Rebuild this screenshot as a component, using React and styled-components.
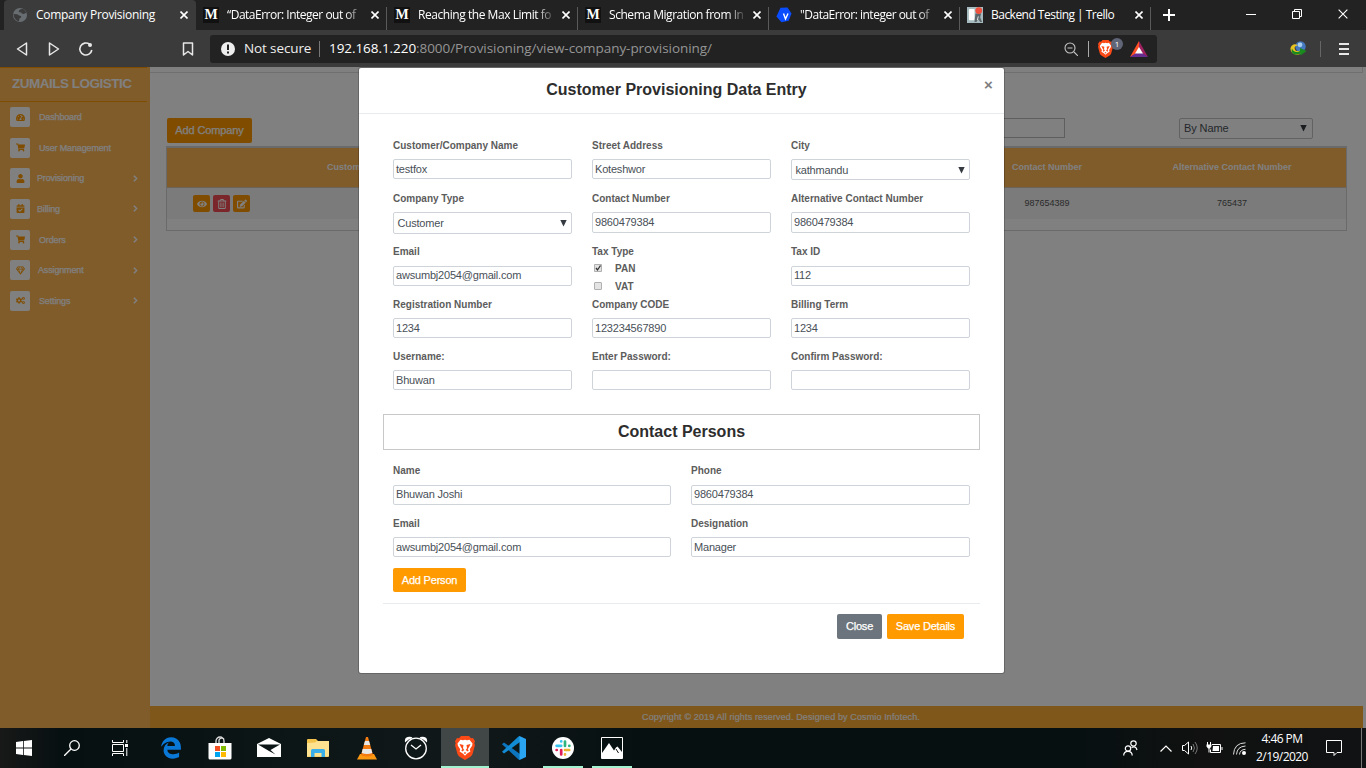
import React from "react";
import styled, { createGlobalStyle } from "styled-components";
import {
  FaTachometerAlt, FaShoppingCart, FaUser, FaCalendarCheck, FaRegGem, FaCogs,
  FaChevronRight, FaEye, FaRegTrashAlt, FaEdit, FaEdgeLegacy,
} from "react-icons/fa";

const sans = '"Liberation Sans", Arial, sans-serif';
const system = '"Open Sans", "Noto Sans", sans-serif';

const GlobalStyle = createGlobalStyle`
  * { box-sizing: border-box; }
  body { margin: 0; background: #222; font-family: ${sans}; overflow: hidden; }
  svg { display: block; flex: none; }
`;

const Screen = styled.div`
  width: 1366px;
  height: 768px;
  display: flex;
  flex-direction: column;
  overflow: hidden;
`;

/* ---------- browser ---------- */
const TabStrip = styled.header`
  height: 30px;
  flex: none;
  display: flex;
  padding-left: 4px;
  background: #222;
  color: #fff;
  font: 12px/30px ${system};
`;
const Tab = styled.div`
  width: ${(p) => (p.$active ? 192 : 191)}px;
  display: flex;
  align-items: center;
  padding: 0 3px 0 ${(p) => (p.$active ? 8 : 7)}px;
  background: ${(p) => (p.$active ? "#3b3b3b" : "transparent")};
  border-radius: 4px 4px 0 0;
`;
const Divider = styled.i`
  width: 1px;
  height: ${(p) => p.$h || 23}px;
  background: ${(p) => p.$color || "#5a5a5a"};
  align-self: ${(p) => (p.$h ? "center" : "flex-end")};
  margin-left: -1px;
  flex: none;
`;
const Favicon = styled.span`
  width: 16px;
  height: 16px;
  margin-right: 8px;
  flex: none;
`;
const MediumMark = styled(Favicon)`
  background: #111;
  color: #fff;
  font: bold 14px/16px "Liberation Serif", serif;
  text-align: center;
`;
const TabTitle = styled.span`
  width: 138px;
  white-space: nowrap;
  letter-spacing: ${(p) => p.$spacing || 0}px;
  ${(p) => p.$fade && "mask-image: linear-gradient(90deg, #000 118px, transparent 138px);"}
`;
const TabClose = styled.span`
  margin-left: auto;
  width: 18px;
  display: grid;
  place-items: center;
`;
const NewTab = styled.span`
  width: 36px;
  display: grid;
  place-items: center;
`;
const WindowButtons = styled.div`
  margin-left: auto;
  display: flex;
  height: 28px;
`;
const WindowButton = styled.span`
  width: 46px;
  display: grid;
  place-items: center;
`;
const Toolbar = styled.nav`
  height: 37px;
  flex: none;
  display: flex;
  align-items: center;
  padding: 0 17px 0 14px;
  background: #3b3b3b;
`;
const NavButtons = styled.div`
  width: 196px;
  display: flex;
  align-items: center;
  gap: 16px;
  padding-right: 14px;
  & > :last-child { margin-left: auto; }
`;
const AddressBar = styled.div`
  width: 947px;
  height: 28px;
  display: flex;
  align-items: center;
  padding: 0 9px 0 11px;
  border-radius: 3px;
  background: #222;
  color: #fff;
  font: 13.5px/26px ${system};
`;
const SecurityLabel = styled.span`
  width: 67px;
  height: 28px;
  margin: 0 9px 0 9px;
  letter-spacing: -0.12px;
  white-space: nowrap;
  color: #eee;
`;
const Url = styled.span`
  height: 28px;
  margin-left: 9px;
  letter-spacing: -0.06px;
  white-space: nowrap;
  color: #959595;
  b { font-weight: 400; color: #fff; }
`;
const AddressTools = styled.div`
  margin-left: auto;
  display: flex;
  align-items: center;
`;
const Shield = styled.span`
  position: relative;
  margin: 0 17px 0 9px;
`;
const ShieldCount = styled.span`
  position: absolute;
  left: 13px;
  top: -2px;
  width: 12px;
  height: 12px;
  border-radius: 6px;
  background: #606577;
  color: #fff;
  font: 8px/12px ${system};
  text-align: center;
`;
const ToolbarEnd = styled.div`
  margin-left: auto;
  display: flex;
  align-items: center;
`;

/* ---------- application page ---------- */
const Page = styled.main`
  position: relative;
  height: 661px;
  flex: none;
  display: flex;
  background: #fff;
`;
const Sidebar = styled.aside`
  width: 150px;
  padding-right: 3px;
  background: #ffb856;
`;
const Brand = styled.div`
  height: 35px;
  border-top: 1px solid #ff9a00;
  border-bottom: 1px solid #ff9a00;
  color: #fff;
  font: bold 13.5px/32px ${sans};
  letter-spacing: -0.5px;
  white-space: nowrap;
  padding-left: 12px;
`;
const Menu = styled.div`
  display: flex;
  flex-direction: column;
  gap: 10.67px;
  padding: 5px 10px 0;
`;
const MenuItem = styled.div`
  height: 20px;
  display: flex;
  align-items: center;
  color: #fff;
  font-size: 9px;
  letter-spacing: -0.15px;
  -webkit-text-stroke: 0.25px #fff;
`;
const MenuIcon = styled.span`
  width: 20px;
  height: 20px;
  margin-right: ${(p) => p.$gap}px;
  border-radius: 2px;
  display: grid;
  place-items: center;
  background: #fff;
  color: #ff9a00;
`;
const Chevron = styled(FaChevronRight)`
  margin-left: auto;
  margin-right: -2px;
  stroke: #fff;
  stroke-width: 30px;
`;
const Content = styled.section`
  width: 1213px;
  display: flex;
  flex-direction: column;
`;
const TopStrip = styled.div`
  height: 6px;
  border: solid #ddd;
  border-width: 0 1px 1px 0;
`;
const Filters = styled.div`
  display: flex;
  align-items: flex-start;
  justify-content: space-between;
  height: 73px;
  padding: 45px 50px 0 17px;
`;
const Button = styled.button`
  height: ${(p) => p.$h || 25}px;
  width: ${(p) => p.$w}px;
  padding: 0;
  border: 0;
  border-radius: 2px;
  background: ${(p) => (p.$grey ? "#6c757d" : "#ff9a00")};
  color: #fff;
  font: 11px/1 ${sans};
  letter-spacing: ${(p) => p.$spacing ?? -0.2}px;
  -webkit-text-stroke: 0.25px #fff;
  white-space: nowrap;
`;
const SearchBox = styled.div`
  width: 280px;
  height: 20px;
  margin-left: 533px;
  border: 1px solid #bbb;
`;
const FilterSelect = styled.div`
  width: 134px;
  height: 21px;
  margin-left: auto;
  display: flex;
  align-items: center;
  justify-content: space-between;
  padding: 0 5px 1px 4px;
  border: 1px solid #c4c4c4;
  border-radius: 2px;
  font-size: 11px;
  letter-spacing: -0.1px;
  color: #495057;
`;
const Table = styled.div`
  width: 1181px;
  margin-left: 16px;
  height: 85px;
  border: 1px solid #d4d4d4;
  border-top: 2px solid #d4d4d4;
`;
const TableRow = styled.div`
  display: grid;
  grid-template-columns: 139px 111px 300px 260px 140px 230px;
  align-items: center;
  text-align: center;
  height: ${(p) => (p.$head ? 40 : 31)}px;
  background: ${(p) => (p.$head ? "#ffb856" : "#f5f5f5")};
  border-bottom: ${(p) => (p.$head ? "1px solid #d8c8b0" : "0")};
  color: ${(p) => (p.$head ? "#fff" : "#555")};
  font: ${(p) => (p.$head ? "bold" : "normal")} 9px/1 ${sans};
  white-space: nowrap;
`;
const RowActions = styled.div`
  display: flex;
  gap: 3px;
  padding-left: 26px;
`;
const RowButton = styled.span`
  width: 17px;
  height: 17px;
  border-radius: 2px;
  display: grid;
  place-items: center;
  color: #fff;
  background: ${(p) => (p.$danger ? "#f44d54" : "#ff9a00")};
`;
const Footer = styled.footer`
  height: 22px;
  margin-top: auto;
  background: #ffae36;
  color: #fff;
  text-align: center;
  font: 9px/22px ${sans};
  letter-spacing: 0.13px;
  -webkit-text-stroke: 0.15px #fff;
  padding-left: 49px;
`;

/* ---------- dialog ---------- */
const Backdrop = styled.div`
  position: absolute;
  inset: 0;
  padding: 1px 0 0 359px;
  background: rgba(0, 0, 0, 0.498);
`;
const Dialog = styled.div`
  width: 645px;
  height: 605px;
  border-radius: 2px;
  background: #fff;
  box-shadow: 0 0 0 1px rgba(0, 0, 0, 0.2);
`;
const DialogHeader = styled.div`
  height: 46px;
  display: flex;
  align-items: center;
  padding: 0 11px 2px 0;
  border-bottom: 1px solid #e9ecef;
`;
const Title = styled.h5`
  flex: 1;
  margin: 0 0 0 10px;
  text-align: center;
  color: #2d2d2d;
  font: bold 16px/20px ${sans};
  padding-top: 1px;
`;
const DismissButton = styled.span`
  width: 9px;
  color: #7f7f7f;
  font: bold 15px/1 ${sans};
  margin-top: -11px;
`;
const DialogBody = styled.div`
  padding: 25px 24px 0;
`;
const FieldGrid = styled.div`
  display: grid;
  grid-template-columns: repeat(3, 179px);
  grid-template-rows: 53px 53px 53px 52px 64px;
  column-gap: 20px;
  padding: 0 10px;
`;
const PersonGrid = styled.div`
  display: grid;
  grid-template-columns: 278px 279px;
  grid-template-rows: 53px 51px;
  column-gap: 20px;
  padding: 14px 10px 0;
`;
const Label = styled.label`
  display: block;
  height: ${(p) => p.$h || 20}px;
  color: #5c5c5c;
  font: bold 10px/14px ${sans};
  white-space: nowrap;
`;
const Control = styled.div`
  height: ${(p) => p.$h || 20}px;
  display: flex;
  align-items: center;
  justify-content: space-between;
  padding: ${(p) => (p.$select ? "1px 4px 0 3.5px" : p.$raised ? "0 2px 2px" : "0 2px")};
  border: 1px solid #ced4da;
  border-radius: 2px;
  color: #495057;
  font: 11px/1 ${sans};
  letter-spacing: -0.19px;
`;
const CheckRow = styled.div`
  display: flex;
  align-items: center;
  gap: 13px;
  height: 18px;
  padding-left: 2px;
  color: #5c5c5c;
  font: bold 10px/12px ${sans};
`;
const CheckLabel = styled.span`
  padding-top: 1px;
`;
const CheckBox = styled.span`
  width: 8px;
  height: 8px;
  border: 1px solid #b0b0b0;
  border-radius: 1px;
  background: #e4e4e4;
`;
const SectionTitle = styled.h5`
  height: 36px;
  margin: 0;
  border: 1px solid #c8c8c8;
  text-align: center;
  color: #2d2d2d;
  font: bold 16px/33px ${sans};
`;
const AddRow = styled.div`
  height: 36px;
  padding-left: 10px;
  border-bottom: 1px solid #e9ecef;
`;
const DialogFooter = styled.div`
  display: flex;
  justify-content: flex-end;
  gap: 5px;
  padding: 10px 16px 0 0;
`;

/* ---------- desktop taskbar ---------- */
const Taskbar = styled.div`
  height: 40px;
  flex: none;
  display: flex;
  color: #fff;
  background: linear-gradient(90deg, #181818 0, #071011 60px, #0d1617 300px, #101819 480px, #071011 640px, #071011 1080px, #101110 1200px, #101214 100%);
`;
const SystemButtons = styled.div`
  display: flex;
  width: 147px;
`;
const AppButtons = styled.div`
  display: flex;
  gap: 1px;
`;
const TaskButton = styled.span`
  width: 48px;
  height: 40px;
  display: grid;
  place-items: center;
  background: ${(p) => (p.$active ? "#414746" : "transparent")};
  ${(p) => p.$line && `
    background-image: linear-gradient(#a3f3d0, #a3f3d0);
    background-size: ${p.$line}px 2px;
    background-position: center bottom;
    background-repeat: no-repeat;
  `}
`;
const Tray = styled.div`
  margin-left: auto;
  display: flex;
  align-items: center;
`;
const TrayItem = styled.span`
  width: ${(p) => p.$w}px;
  display: grid;
  place-items: center;
`;
const Clock = styled.span`
  width: 60px;
  text-align: center;
  font: 12px/18px ${system};
  letter-spacing: -0.55px;
  white-space: nowrap;
`;

/* ---------- drawings ---------- */
const Cross = ({ size = 8, width = 1.6 }) => (
  <svg width={size} height={size} viewBox="0 0 8 8" stroke="#fff" strokeWidth={width}><path d="M.5.5l7 7M7.5.5l-7 7" /></svg>
);
const Caret = () => (
  <svg width="7" height="7" viewBox="0 0 7 7"><path d="M.3 0h6.400L3.500 6.500z" fill="#343a40" /></svg>
);
const Globe = () => (
  <svg width="16" height="16" viewBox="0 0 16 16"><circle cx="8" cy="8" r="7" fill="#686d72" /><path d="M1.500 7l3.500.2c1.500 0 1.300 1.600 3 1.600s1.600 1.800.2 2.300-.4 2.400-1.700 3.300Q2 12.500 1.500 7zM8 2.500l3-.8q2.500 1.300 3.300 4l-2.500 1.200-2-.3q-.3-1.300-2-1.300t-.9-1.500z" fill="#3b3b3b" /></svg>
);
const Vuf = () => (
  <svg width="16" height="16" viewBox="0 0 16 16"><path d="M4.500.8l7-.3 4 6.100-2.800 7.200-7.200 1.500L.4 9.500z" fill="#0a4dff" /><path d="M7.500 6.500l2 5.500L12 6.500" fill="none" stroke="#fff" strokeWidth="1.400" /></svg>
);
const Board = () => (
  <svg width="16" height="16" viewBox="0 0 17 17"><path d="M0 0h17v17H0z" fill="#a5bbc0" /><rect x="2" y="2" width="6" height="12" rx="1" fill="#fff" /><path d="M9 7h6l-1 4 2 5h-2l-2-3-2 3H8z" fill="#5d666a" /><path d="M12 10l-1 4" stroke="#eee" /><circle cx="12.500" cy="3.800" r="3.600" fill="#f0503e" /></svg>
);
const BraveLogo = ({ width, height }) => (
  <svg width={width} height={height} viewBox="0 0 20 24">
    <path d="M6 0h8l2 2.200 2-.2 2 3.200-.7 2L20 9l-2.300 8.600q-.5 2-2.200 3.200L10 24l-5.500-3.200q-1.700-1.200-2.200-3.200L0 9l.7-1.800-.7-2L2 2l2 .2z" fill="#fb4a16" />
    <path d="M5.500 3.700l2.500.5 2-.5 2 .5 2.500-.5 3 3.800-.4 2.300-2.300 3.500.6 2.300-3.200 1.900L10 19.800l-2.200-2.300-3.200-1.900.6-2.300-2.300-3.500-.4-2.300z" fill="#fff" />
    <path d="M4.500 8l4 1-.5 3.300 1.300 1.700-2 1.500-1-1.200 1-1-1.800-3zM15.500 8l-4 1 .5 3.300-1.300 1.700 2 1.500 1-1.200-1-1 1.800-3zM8.700 17l1.300-.9 1.300.9-1.300 1z" fill="#fb4a16" />
  </svg>
);
const Bat = () => (
  <svg width="18" height="16" viewBox="0 0 18 16"><path d="M9 0L0 16l9-5z" fill="#ff5026" /><path d="M9 0l9 16-9-5z" fill="#9e2160" /><path d="M0 16h18l-9-6z" fill="#662d91" /><path d="M9 6l4 6.500H5z" fill="#fff" /></svg>
);
const Idm = () => (
  <svg width="17" height="15" viewBox="0 0 17 15"><circle cx="10.500" cy="5.500" r="5.200" fill="#4579bf" /><circle cx="10" cy="3.800" r="2.400" fill="#a9cdec" /><path d="M.5 7C2 3 5 2.500 8 4.500 5 4.500 4 6.500 5 8.500s4 2 7 0l-1 4C6 16 0 12 .5 7z" fill="#e9c320" /><path d="M2 7.500c1 3.500 5 4.500 8 2.500V7l6.500 3-6 4.500v-2C6 15 0 13 2 7.500z" fill="#188a1e" /></svg>
);
const StoreIcon = () => (
  <svg width="24" height="24" viewBox="0 0 24 24"><path d="M8 7V5a4 4 0 0 1 8 0v2M11 7V4a3 3 0 0 1 5-1" fill="none" stroke="#ddd" strokeWidth="1.300" /><path d="M.5 7h23v15a1.500 1.500 0 0 1-1.500 1.500H2A1.500 1.500 0 0 1 .5 22z" fill="#fff" /><path d="M7 10h5v5H7z" fill="#f25022" /><path d="M13 10h5v5h-5z" fill="#7fba00" /><path d="M7 16h5v5H7z" fill="#00a4ef" /><path d="M13 16h5v5h-5z" fill="#ffb900" /></svg>
);
const MailIcon = () => (
  <svg width="24" height="20" viewBox="0 0 24 20"><path d="M0 6L12 0l12 6v13H0z" fill="#fff" /><path d="M1 6.500h22L13.500 12l5 4.500L12 13z" fill="#0d1617" /></svg>
);
const FolderIcon = () => (
  <svg width="22" height="19" viewBox="0 0 22 19"><path d="M0 1a1 1 0 0 1 1-1h8l2 2h10.500v16H0z" fill="#f2c24b" /><path d="M0 4l8-.5L10 2h12v15.500H0z" fill="#ffe28f" /><path d="M4 18v-6.500A1.500 1.500 0 0 1 5.500 10h11a1.500 1.500 0 0 1 1.500 1.500V18h-3.500v-4h-7v4z" fill="#3aaee8" /></svg>
);
const ConeIcon = () => (
  <svg width="20" height="23" viewBox="0 0 20 23"><path d="M3 17h14l3 5.500H0z" fill="#fb9a12" /><path d="M9 0h2l5 18q-6 3-12 0z" fill="#f47a12" /><path d="M8 4h4l1.200 4H6.800zM5.700 12h8.600l1 4q-5.300 2-10.600 0z" fill="#e8e8e8" /></svg>
);
const AlarmIcon = () => (
  <svg width="24" height="24" viewBox="0 0 24 24" fill="none" stroke="#fff"><circle cx="12" cy="12.500" r="10.300" strokeWidth="1.300" /><path d="M7 9l5 4 5-4" strokeWidth="1.300" /><path d="M1 6.500Q0 1 5 .7q3-.2 3.500 1.300Q4 3 1 6.500zM23 6.500Q24 1 19 .7q-3-.2-3.500 1.300Q20 3 23 6.500z" fill="#fff" stroke="none" /></svg>
);
const CodeIcon = () => (
  <svg width="24" height="24" viewBox="0 0 24 24"><path d="M0 8.200l2-1.800L18 18v6l-1.500-.5z" fill="#0d75bd" /><path d="M0 15.700l2 1.800L18 6V0l-1.500.5z" fill="#128bd5" /><path d="M17.500 0L24 3v18l-6.500 3z" fill="#2aa5f2" /></svg>
);
const SlackIcon = () => (
  <svg width="22" height="22" viewBox="0 0 22 22" strokeLinecap="round"><circle cx="11" cy="11" r="11" fill="#fff" /><path d="M9.200 4.300v.2M4.600 8.800h4.600" stroke="#36c5f0" strokeWidth="2.700" /><path d="M13 4.600v4.300M17.400 8.800h-.2" stroke="#2eb67d" strokeWidth="2.700" /><path d="M17.200 13h-4.200M13 17.600v-.2" stroke="#ecb22e" strokeWidth="2.700" /><path d="M9.200 17.400v-4.400M4.600 13h.2" stroke="#e01e5a" strokeWidth="2.700" /></svg>
);
const PhotoIcon = () => (
  <svg width="22" height="22" viewBox="0 0 22 22"><path d="M.5.5h21v21H.5z" fill="none" stroke="#fff" /><path d="M1 16l7-10 5 7.500 2-3 1.500-1L21 15v6H1z" fill="#fff" /><path d="M15 12l2.500 4" stroke="#111" /></svg>
);

const tabs = [
  { title: "Company Provisioning", icon: <Favicon><Globe /></Favicon>, active: true, spacing: -0.3 },
  { title: "“DataError: Integer out of", icon: <MediumMark>M</MediumMark>, fade: true, spacing: -0.5 },
  { title: "Reaching the Max Limit fo", icon: <MediumMark>M</MediumMark>, fade: true, spacing: -0.45 },
  { title: "Schema Migration from In", icon: <MediumMark>M</MediumMark>, fade: true, spacing: -0.45 },
  { title: "\"DataError: integer out of", icon: <Favicon><Vuf /></Favicon>, fade: true, spacing: -0.5 },
  { title: "Backend Testing | Trello", icon: <Favicon><Board /></Favicon>, spacing: -0.52 },
];

const menu = [
  ["Dashboard", FaTachometerAlt, 9, false],
  ["User Management", FaShoppingCart, 9, false],
  ["Provisioning", FaUser, 7, true],
  ["Billing", FaCalendarCheck, 7, true],
  ["Orders", FaShoppingCart, 9, true],
  ["Assignment", FaRegGem, 8, true],
  ["Settings", FaCogs, 9, true],
];

const Field = ({ label, value, h, labelHeight, select }) => (
  <div>
    <Label $h={labelHeight}>{label}</Label>
    <Control $h={h} $select={select} $raised={labelHeight === 21}>{value}{select && <Caret />}</Control>
  </div>
);

function Browser() {
  return (
    <>
      <TabStrip>
        {tabs.map((t, i) => (
          <React.Fragment key={t.title}>
            <Tab $active={t.active}>
              {t.icon}
              <TabTitle $fade={t.fade} $spacing={t.spacing}>{t.title}</TabTitle>
              <TabClose><Cross /></TabClose>
            </Tab>
            {i > 0 && <Divider />}
          </React.Fragment>
        ))}
        <NewTab><svg width="12" height="12" stroke="#fff" strokeWidth="2"><path d="M6 0v12M0 6h12" /></svg></NewTab>
        <WindowButtons>
          <WindowButton><svg width="10" height="10" stroke="#fff"><path d="M0 5.500h10" /></svg></WindowButton>
          <WindowButton><svg width="10" height="10" fill="none" stroke="#fff"><path d="M.5 2.500h7v7h-7zM2.500 2.500v-2h7v7h-2" /></svg></WindowButton>
          <WindowButton><Cross size={10} width={0.9} /></WindowButton>
        </WindowButtons>
      </TabStrip>
      <Toolbar>
        <NavButtons>
          <svg width="16" height="16" fill="none" stroke="#e8e8e8" strokeWidth="1.500" strokeLinejoin="round"><path d="M12.500 2v12L3.500 8z" /></svg>
          <svg width="16" height="16" fill="none" stroke="#e8e8e8" strokeWidth="1.500" strokeLinejoin="round"><path d="M3.500 2v12l9-6z" /></svg>
          <svg width="16" height="16" fill="none" stroke="#e8e8e8" strokeWidth="1.600"><path d="M11.500 3.200A6 6 0 1 0 13.800 9" /><circle cx="12" cy="4" r="2" fill="#e8e8e8" stroke="none" /></svg>
          <svg width="16" height="16" fill="none" stroke="#e8e8e8" strokeWidth="1.500" strokeLinejoin="round"><path d="M3.500 2h9v12L8 10.500 3.500 14z" /></svg>
        </NavButtons>
        <AddressBar>
          <svg width="14" height="14"><circle cx="7" cy="7" r="7" fill="#eee" /><path d="M7 2.500v5.500M7 9.500v2" stroke="#222" strokeWidth="2" /></svg>
          <SecurityLabel>Not secure</SecurityLabel>
          <Divider $h={16} $color="#777" />
          <Url><b>192.168.1.220</b>:8000/Provisioning/view-company-provisioning/</Url>
          <AddressTools>
            <svg width="14" height="14" fill="none" stroke="#c5c5c5" strokeWidth="1.100"><circle cx="6" cy="6" r="5" /><path d="M3.500 6h5M10 10l4 4" /></svg>
            <svg width="11" height="16" />
            <Divider $h={16} $color="#aaa" />
            <Shield><BraveLogo width={15} height={18} /><ShieldCount>1</ShieldCount></Shield>
            <Bat />
          </AddressTools>
        </AddressBar>
        <ToolbarEnd>
          <Idm />
          <svg width="14" height="16" />
          <Divider $h={16} $color="#666" />
          <svg width="28" height="14" stroke="#e8e8e8" strokeWidth="2"><path d="M18 2h10M18 7h10M18 12h10" /></svg>
        </ToolbarEnd>
      </Toolbar>
    </>
  );
}

function CustomerDialog() {
  return (
    <Dialog>
      <DialogHeader>
        <Title>Customer Provisioning Data Entry</Title>
        <DismissButton>×</DismissButton>
      </DialogHeader>
      <DialogBody>
        <FieldGrid>
          <Field label="Customer/Company Name" value="testfox" />
          <Field label="Street Address" value="Koteshwor" />
          <Field label="City" value="kathmandu" select h={21} />
          <Field label="Company Type" value="Customer" select h={22} />
          <Field label="Contact Number" value="9860479384" h={21} />
          <Field label="Alternative Contact Number" value="9860479384" h={21} />
          <Field label="Email" value="awsumbj2054@gmail.com" labelHeight={21} />
          <div>
            <Label $h={14}>Tax Type</Label>
            <CheckRow>
              <svg width="8" height="8"><path d="M.5.5h7v7h-7z" fill="#e2e2e2" stroke="#b0b0b0" /><path d="M2 4l1.500 2L6.500 1.500" fill="none" stroke="#333" strokeWidth="1.300" /></svg>
              <CheckLabel>PAN</CheckLabel>
            </CheckRow>
            <CheckRow><CheckBox /><CheckLabel>VAT</CheckLabel></CheckRow>
          </div>
          <Field label="Tax ID" value="112" labelHeight={21} />
          <Field label="Registration Number" value="1234" />
          <Field label="Company CODE" value="123234567890" />
          <Field label="Billing Term" value="1234" />
          <Field label="Username:" value="Bhuwan" />
          <Field label="Enter Password:" value="" />
          <Field label="Confirm Password:" value="" />
        </FieldGrid>
        <SectionTitle>Contact Persons</SectionTitle>
        <PersonGrid>
          <Field label="Name" value="Bhuwan Joshi" labelHeight={21} />
          <Field label="Phone" value="9860479384" labelHeight={21} />
          <Field label="Email" value="awsumbj2054@gmail.com" />
          <Field label="Designation" value="Manager" />
        </PersonGrid>
        <AddRow><Button $w={73} $h={24}>Add Person</Button></AddRow>
        <DialogFooter>
          <Button $w={45} $grey>Close</Button>
          <Button $w={77}>Save Details</Button>
        </DialogFooter>
      </DialogBody>
    </Dialog>
  );
}

function ProvisioningPage() {
  return (
    <Page>
      <Sidebar>
        <Brand>ZUMAILS LOGISTIC</Brand>
        <Menu>
          {menu.map(([name, Icon, gap, more]) => (
            <MenuItem key={name}>
              <MenuIcon $gap={gap}><Icon size={9} /></MenuIcon>
              {name}
              {more && <Chevron size={7} />}
            </MenuItem>
          ))}
        </Menu>
      </Sidebar>
      <Content>
        <TopStrip />
        <Filters>
          <Button $w={85} $spacing={-0.12}>Add Company</Button>
          <SearchBox />
          <FilterSelect>By Name<Caret /></FilterSelect>
        </Filters>
        <Table>
          <TableRow $head>
            <span /><span>Customer Name</span><span /><span /><span>Contact Number</span><span>Alternative Contact Number</span>
          </TableRow>
          <TableRow>
            <RowActions>
              <RowButton><FaEye size={10} /></RowButton>
              <RowButton $danger><FaRegTrashAlt size={10} /></RowButton>
              <RowButton><FaEdit size={10} /></RowButton>
            </RowActions>
            <span /><span /><span /><span>987654389</span><span>765437</span>
          </TableRow>
        </Table>
        <Footer>Copyright © 2019 All rights reserved. Designed by Cosmio Infotech.</Footer>
      </Content>
      <Backdrop><CustomerDialog /></Backdrop>
    </Page>
  );
}

function DesktopTaskbar() {
  return (
    <Taskbar>
      <SystemButtons>
        <TaskButton><svg width="16" height="16" fill="#fff"><path d="M0 2l7-1v6.500H0zM7.800.9L16 0v7.500H7.800zM0 8.400h7V15l-7-1zM7.800 8.400H16V16l-8.200-1z" /></svg></TaskButton>
        <TaskButton><svg width="16" height="16" fill="none" stroke="#fff" strokeWidth="1.300"><circle cx="10.500" cy="5.500" r="4.800" /><path d="M7 9L0 16" /></svg></TaskButton>
        <TaskButton><svg width="17" height="16" fill="none" stroke="#fff"><path d="M.5 0v2.500h11V0M.5 16v-2.500h11V16M.5 4.500h11v7H.5zM14.800 0v3M14.800 8v8" /><path d="M13 4h3v3h-3z" fill="#fff" stroke="none" /></svg></TaskButton>
      </SystemButtons>
      <AppButtons>
        <TaskButton><FaEdgeLegacy size={22} color="#0a78d7" /></TaskButton>
        <TaskButton><StoreIcon /></TaskButton>
        <TaskButton><MailIcon /></TaskButton>
        <TaskButton><FolderIcon /></TaskButton>
        <TaskButton><ConeIcon /></TaskButton>
        <TaskButton><AlarmIcon /></TaskButton>
        <TaskButton $active $line={48}><BraveLogo width={20} height={24} /></TaskButton>
        <TaskButton><CodeIcon /></TaskButton>
        <TaskButton $line={40}><SlackIcon /></TaskButton>
        <TaskButton $line={40}><PhotoIcon /></TaskButton>
      </AppButtons>
      <Tray>
        <TrayItem $w={48}><svg width="15" height="16" fill="none" stroke="#fff" strokeWidth="1.200"><circle cx="10.500" cy="3.500" r="2.700" /><circle cx="5" cy="8.500" r="2.700" /><path d="M.7 15.500c0-5.500 8.500-5.500 8.500 0M8.500 7.500q4.500-2 5.500 2.500" /></svg></TrayItem>
        <TrayItem $w={24}><svg width="12" height="7" fill="none" stroke="#fff" strokeWidth="1.200"><path d="M.5 6.500L6 1l5.500 5.500" /></svg></TrayItem>
        <TrayItem $w={24}><svg width="17" height="14" fill="none" stroke="#fff"><path d="M.5 4.500h2l4-3.500v12L2.500 9.500h-2z" /><path d="M9 5q1.500 2 0 4" /><path d="M11 3q3 4 0 8M13 1q4.500 6 0 12" stroke="#777" /></svg></TrayItem>
        <TrayItem $w={25}><svg width="17" height="12" fill="none" stroke="#fff"><path d="M6 2.500h8.500v8H4.500v-3M16 5v3M1.500 0v3M4.500 0v3M3 6v4.500" /><path d="M.5 2.500h5V4L4 6.500H2L.5 4.500zM7 4h6v5H6.500z" fill="#fff" stroke="none" /></svg></TrayItem>
        <TrayItem $w={25}><svg width="13" height="13" fill="none" stroke="#ddd"><path d="M.5 12.500Q1 1 12.500.8M3.500 12.500Q4 4.500 12.500 4M6.500 12.500q.5-5 6-5.200" /><circle cx="11" cy="11" r="2" fill="#fff" stroke="none" /></svg></TrayItem>
        <Clock>4:46 PM<br />2/19/2020</Clock>
        <TrayItem $w={44}><svg width="16" height="16" fill="none" stroke="#fff"><path d="M.5.500h15v12H11l-3 3v-3H.5z" /></svg></TrayItem>
        <svg width="6" height="40"><path d="M5.500 0v40" stroke="#777" /></svg>
        <svg width="4" height="40" />
      </Tray>
    </Taskbar>
  );
}

export default function App() {
  return (
    <Screen>
      <GlobalStyle />
      <Browser />
      <ProvisioningPage />
      <DesktopTaskbar />
    </Screen>
  );
}
